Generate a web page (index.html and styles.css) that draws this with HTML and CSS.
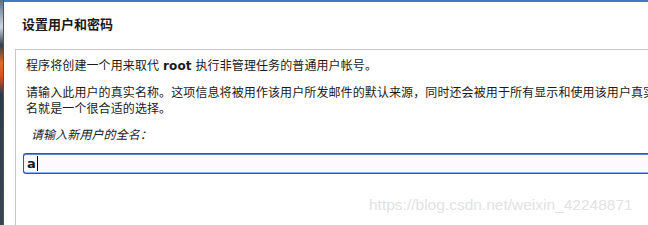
FILE: index.html
```html
<!DOCTYPE html>
<html lang="zh-CN">
<head>
    <meta charset="UTF-8">
    <title>设置用户和密码</title>
    <link rel="stylesheet" href="styles.css">
</head>
<body>
    <div class="frame">
        <div class="edge"></div>
        <div class="window">
            <h1 class="title">设置用户和密码</h1>
            <div class="panel">
                <p class="line">程序将创建一个用来取代 <b>root</b> 执行非管理任务的普通用户帐号。</p>
                <p class="para">请输入此用户的真实名称。这项信息将被用作该用户所发邮件的默认来源，同时还会被用于所有显示和使用该用户真实<br>名就是一个很合适的选择。</p>
                <label class="label">请输入新用户的全名：</label>
                <div class="entry"><span class="value">a</span><span class="caret"></span></div>
            </div>
        </div>
    </div>
    <div class="watermark">https://blog.csdn.net/weixin_42248871</div>
</body>
</html>
```

FILE: styles.css
```css
body {
    margin: 0;
    width: 648px;
    height: 225px;
    overflow: hidden;
    background: #fff;
    font-family: "DejaVu Sans", "Noto Sans CJK SC", sans-serif;
    color: #1a1a1a;
    position: relative;
}
.frame {
    display: flex;
    height: 225px;
}
.edge {
    width: 3px;
    background: linear-gradient(#5a6e86 0%, #cfd6de 12%, #30404e 20%, #e06a2a 28%, #d85020 34%, #2c3a48 42%, #3a4552 100%);
    border-right: 1px solid #34587e;
}
.window {
    flex: 1;
    border-top: 2px solid #3b7cc6;
    overflow: hidden;
}
.title {
    margin: 15px 0 0 18px;
    font-size: 13px;
    line-height: 16px;
    font-weight: bold;
}
.panel {
    margin: 16px 0 0 11px;
    height: 200px;
    border-top: 1px solid #c6c6c6;
    border-left: 1px solid #c6c6c6;
    padding: 8px 0 0 10px;
    font-size: 12px;
    line-height: 16px;
    letter-spacing: 0.1px;
    white-space: nowrap;
}
.panel p {
    margin: 0;
}
.line b {
    font-weight: bold;
    font-size: 12px;
}
.para {
    margin-top: 11px !important;
}
.label {
    display: block;
    margin: 10px 0 0 5px;
    font-style: italic;
}
.entry {
    margin: 10px 0 0 -3px;
    height: 19px;
    border: 1px solid #2a58b0;
    border-right: none;
    border-radius: 3px 0 0 3px;
    background: #fdf9ff;
    box-shadow: inset 0 -1px 0 #8fb0ee, inset 0 1px 0 #5d84cc;
    display: flex;
    align-items: center;
    padding-left: 3px;
}
.value {
    font-size: 13px;
    font-weight: bold;
}
.caret {
    width: 1px;
    height: 15px;
    margin-left: 1px;
    background: #000;
}
.watermark {
    position: absolute;
    left: 369px;
    top: 196px;
    font-family: "Liberation Sans", sans-serif;
    font-size: 15.5px;
    color: #e2e2e2;
    white-space: nowrap;
}
```
